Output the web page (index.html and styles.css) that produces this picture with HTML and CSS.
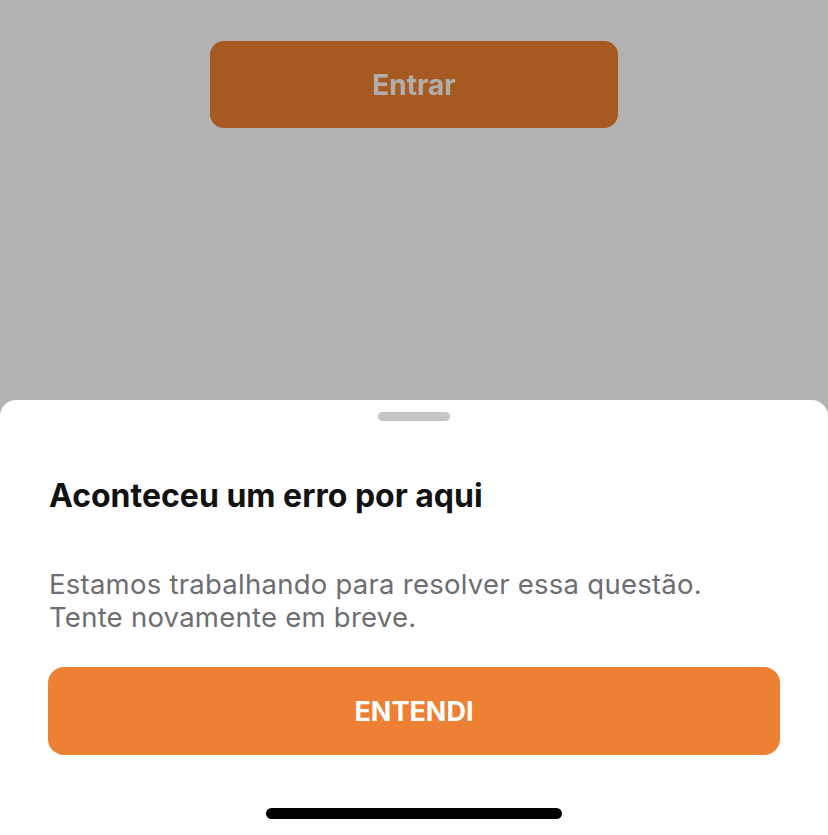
FILE: index.html
```html
<!DOCTYPE html>
<html lang="pt-BR">
<head>
  <meta charset="UTF-8">
  <meta name="viewport" content="width=device-width, initial-scale=1.0">
  <title>Erro</title>
  <link rel="stylesheet" href="styles.css">
</head>
<body>
<div class="screen">
  <!-- Login screen behind the dimmed overlay -->
  <div class="backdrop">
    <button class="login-button" type="button">Entrar</button>
  </div>

  <!-- Bottom sheet with the error message -->
  <div class="sheet">
    <div class="grabber"></div>
    <h2 class="sheet-title">Aconteceu um erro por aqui</h2>
    <p class="sheet-text">Estamos trabalhando para resolver essa questão.<br>Tente novamente em breve.</p>
    <button class="primary-button" type="button">ENTENDI</button>
    <div class="home-indicator"></div>
  </div>
</div>
</body>
</html>
```

FILE: styles.css
```css
body {
  margin: 0;
  background-color: #b2b2b2;
  font-family: Inter, "Noto Sans", sans-serif;
}
.screen {
  height: 835px;
  display: flex;
  flex-direction: column;
}
.backdrop {
  flex: 1;
  display: flex;
  justify-content: center;
  padding-top: 41px;
}
.login-button {
  width: 408px;
  height: 87px;
  border: none;
  border-radius: 14px;
  background-color: #a65a21;
  color: #b0aeab;
  font-family: inherit;
  font-size: 28px;
  font-weight: 700;
}
.sheet {
  height: 435px;
  box-sizing: border-box;
  background-color: #fff;
  border-radius: 16px 16px 0 0;
  padding: 12px 48px 0;
  display: flex;
  flex-direction: column;
}
.grabber {
  align-self: center;
  width: 72px;
  height: 9px;
  border-radius: 5px;
  background-color: #c6c6c6;
}
.sheet-title {
  margin: 56px 0 0 1px;
  font-size: 32px;
  line-height: 38px;
  font-weight: 700;
  color: #121212;
}
.sheet-text {
  margin: 53px 0 0 1px;
  font-size: 27.5px;
  line-height: 33px;
  letter-spacing: 0.25px;
  color: #6d6d72;
}
.primary-button {
  margin-top: 33px;
  height: 88px;
  border: none;
  border-radius: 16px;
  background-color: #ed8032;
  color: #fff;
  font-family: inherit;
  font-size: 27px;
  font-weight: 700;
}
.home-indicator {
  align-self: center;
  margin-top: 53px;
  width: 296px;
  height: 11px;
  border-radius: 6px;
  background-color: #000;
}
```
